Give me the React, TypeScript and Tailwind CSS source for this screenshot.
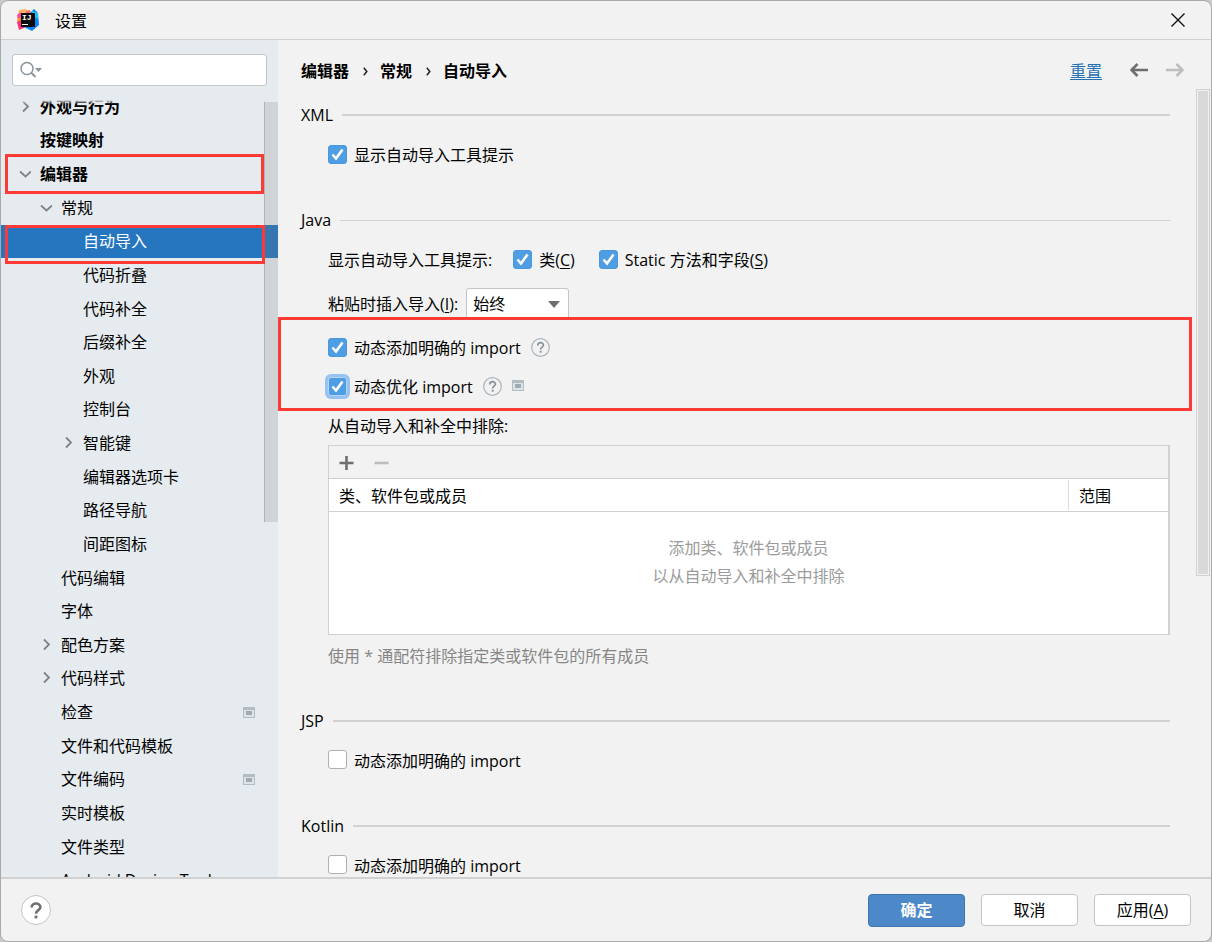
import type { ReactNode } from 'react';

type TreeItem = {
  label: string;
  level: number;
  arrow?: 'open' | 'closed';
  bold?: boolean;
  selected?: boolean;
  marked?: boolean;
  project?: boolean;
};

const treeItems: TreeItem[] = [
  { label: '外观与行为', level: 0, arrow: 'closed', bold: true },
  { label: '按键映射', level: 0, bold: true },
  { label: '编辑器', level: 0, arrow: 'open', bold: true, marked: true },
  { label: '常规', level: 1, arrow: 'open' },
  { label: '自动导入', level: 2, selected: true, marked: true },
  { label: '代码折叠', level: 2 },
  { label: '代码补全', level: 2 },
  { label: '后缀补全', level: 2 },
  { label: '外观', level: 2 },
  { label: '控制台', level: 2 },
  { label: '智能键', level: 2, arrow: 'closed' },
  { label: '编辑器选项卡', level: 2 },
  { label: '路径导航', level: 2 },
  { label: '间距图标', level: 2 },
  { label: '代码编辑', level: 1 },
  { label: '字体', level: 1 },
  { label: '配色方案', level: 1, arrow: 'closed' },
  { label: '代码样式', level: 1, arrow: 'closed' },
  { label: '检查', level: 1, project: true },
  { label: '文件和代码模板', level: 1 },
  { label: '文件编码', level: 1, project: true },
  { label: '实时模板', level: 1 },
  { label: '文件类型', level: 1 },
  { label: 'Android Design Tools', level: 1 },
];

const indent = ['pl-4', 'pl-[37px]', 'pl-[59px]'];

function Logo() {
  return (
    <svg width="22" height="22" viewBox="0 0 22 22" aria-hidden="true">
      <path d="M2 1 L9 0 L12 4 L5 14 L1 6 Z" fill="#fdb460" />
      <path d="M0 6 L4 3 L8 9 L5 14 L1 12 Z" fill="#ff45a0" />
      <path d="M1 9 L5 8 L5 13 L0 14 Z" fill="#ff8a1e" />
      <path d="M0 13 L5 11 L9 18 L2 21 Z" fill="#fe2f7c" />
      <path d="M9 2 L13 1 L14 5 L9 5 Z" fill="#ff6a5c" />
      <path d="M13 4 L17 0 L21 4 L22 16 L15 22 L7 18 L14 12 Z" fill="#0a84f8" />
      <path d="M15 2 L21 4 L21 10 L15 7 Z" fill="#21c5f5" />
      <rect x="4" y="4" width="14" height="14" fill="#0b0b0b" />
      <text x="5" y="11" fontSize="8" fontWeight="700" fill="#fff" fontFamily="Liberation Mono, monospace">IJ</text>
      <rect x="5" y="15" width="6" height="1" fill="#fff" />
    </svg>
  );
}

function Arrow({ kind }: { kind: 'open' | 'closed' }) {
  return (
    <svg width="14" height="14" viewBox="0 0 14 14" fill="none" stroke="#7f8487" strokeWidth="1.8" aria-hidden="true">
      {kind === 'open' ? <path d="M4 4.5 L9.5 9.5 L15 4.5" className="-translate-x-px" /> : <path d="M6 1.5 L11 6.5 L6 11.5" />}
    </svg>
  );
}

function ProjectIcon() {
  return (
    <svg width="12" height="11" viewBox="0 0 12 11" aria-hidden="true" shapeRendering="crispEdges">
      <rect width="12" height="11" fill="#b1bcc3" />
      <rect x="1" y="3" width="10" height="7" fill="#dde3e7" />
      <rect x="3" y="4" width="6" height="4" fill="#9fabb2" />
    </svg>
  );
}

function HelpIcon() {
  return (
    <button type="button" aria-label="帮助" className="-mt-0.5 flex">
      <svg width="19" height="19" viewBox="0 0 19 19" fill="none" aria-hidden="true">
        <circle cx="9.5" cy="9.5" r="8.8" stroke="#a9b5bc" strokeWidth="1.2" />
        <path d="M6.8 7.4 C6.8 3.8 12.4 3.9 12.4 7.2 C12.4 9.2 9.6 9.2 9.6 11.4" stroke="#87939a" strokeWidth="1.7" />
        <rect x="8.7" y="12.8" width="1.9" height="1.9" fill="#87939a" />
      </svg>
    </button>
  );
}

function Checkbox({ children, checked = false, focused = false }: { children: ReactNode; checked?: boolean; focused?: boolean }) {
  return (
    <label className="flex h-6 items-center gap-[7px]">
      <span className="relative -mt-0.5 flex">
        <input
          type="checkbox"
          defaultChecked={checked}
          className={`peer h-[19px] w-[19px] appearance-none rounded-[3px] border border-[#b0b0b0] bg-white outline-none ${focused ? 'ring-3 ring-[#97c3f3] checked:border-[#b5d4f5] checked:bg-[#4f9ee3]' : 'checked:border-[#4a97dd] checked:bg-[#4f9ee3]'}`}
        />
        <svg viewBox="0 0 19 19" className="pointer-events-none absolute inset-0 hidden peer-checked:block" fill="none" stroke="#fff" strokeWidth="2.6" aria-hidden="true">
          <path d="M4.5 9.5 L8 13.5 L14.5 4.5" />
        </svg>
      </span>
      <span>{children}</span>
    </label>
  );
}

function Section({ title, thin = false, children }: { title: string; thin?: boolean; children: ReactNode }) {
  return (
    <section>
      <div className="flex h-6 items-center gap-[9px]">
        <h2>{title}</h2>
        <div className={`flex-1 bg-[#d1d1d1] ${thin ? 'h-px' : 'h-0.5'}`} />
      </div>
      <div className="mt-4 pl-[27px]">{children}</div>
    </section>
  );
}

function Sidebar() {
  return (
    <aside className="flex w-[277px] shrink-0 flex-col bg-[#e6ebef]">
      <div className="px-[11px] pt-3.5">
        <div className="flex h-8 items-center rounded-[3px] border border-[#c4c4c4] bg-white pl-[7px]">
          <svg width="22" height="18" viewBox="0 0 22 18" fill="none" aria-hidden="true">
            <circle cx="7" cy="7.5" r="6" stroke="#8a949b" strokeWidth="1.5" />
            <path d="M11.5 12 L15.5 16" stroke="#8a949b" strokeWidth="2" />
            <path d="M15 7 H22 L18.5 11 Z" fill="#8a949b" />
          </svg>
          <input type="text" aria-label="搜索设置" className="min-w-0 flex-1 px-1 outline-none" />
        </div>
      </div>
      <div className="relative mt-3.5 min-h-0 flex-1 overflow-hidden">
        <ul className="-mt-2.5 flex h-[807px] flex-col">
          {treeItems.map((item) => (
            <li
              key={item.label}
              className={`relative flex flex-1 items-center pr-[23px] ${indent[item.level]} ${item.selected ? 'bg-[#2675bf] text-white' : ''} ${item.bold ? 'font-bold' : ''}`}
            >
              <span className="flex w-[23px] shrink-0">{item.arrow && <Arrow kind={item.arrow} />}</span>
              <span className="flex-1 whitespace-nowrap">{item.label}</span>
              {item.project && <ProjectIcon />}
              {item.marked && (
                <span className={`pointer-events-none absolute left-1 z-10 border-3 border-[#fe3a37] ${item.selected ? 'top-0 right-[13px] h-[39px]' : '-top-[3px] right-3.5 h-10'}`} />
              )}
            </li>
          ))}
        </ul>
        <div className="absolute inset-x-0 top-0 h-1 bg-linear-to-b from-[#e6ebef] to-transparent" />
        <div className="absolute top-0.5 right-0 h-[420px] w-3.5 border-l border-black/15 bg-[#777]/20" />
      </div>
    </aside>
  );
}

function ExcludeTable() {
  return (
    <div className="mt-[7px] border border-r-2 border-[#d1d1d1]">
      <div className="flex h-8 items-center gap-5 pl-2.5">
        <button type="button" aria-label="添加">
          <svg width="15" height="15" viewBox="0 0 15 15" stroke="#6e6e6e" strokeWidth="2.6" aria-hidden="true">
            <path d="M7.5 1 V15 M0.5 8 H14.5" />
          </svg>
        </button>
        <button type="button" aria-label="移除" disabled>
          <svg width="15" height="15" viewBox="0 0 15 15" stroke="#bdbdbd" strokeWidth="2.6" aria-hidden="true">
            <path d="M0.5 8 H14.5" />
          </svg>
        </button>
      </div>
      <table className="w-full border-t border-[#d1d1d1] bg-white">
        <thead>
          <tr className="h-[33px] border-b border-[#d1d1d1] text-left">
            <th className="pt-0.5 pb-0 pl-2.5 font-normal">类、软件包或成员</th>
            <th className="w-[100px] p-0 font-normal">
              <span className="block border-l border-[#dcdcdc] pt-0.5 pl-2.5 leading-7">范围</span>
            </th>
          </tr>
        </thead>
        <tbody>
          <tr>
            <td colSpan={2} className="h-[122px] pt-[22px] text-center align-top leading-7 text-[#9b9b9b]">
              添加类、软件包或成员
              <br />
              以从自动导入和补全中排除
            </td>
          </tr>
        </tbody>
      </table>
    </div>
  );
}

function Crumb() {
  return (
    <svg width="5" height="9" viewBox="0 0 5 9" fill="none" stroke="#222" strokeWidth="1.5" aria-hidden="true">
      <path d="M0.8 0.8 L3.8 4.5 L0.8 8.2" />
    </svg>
  );
}

function Content() {
  return (
    <main className="relative mr-px flex min-w-0 flex-1 flex-col">
      <header className="mt-3.5 flex h-[34px] items-center justify-between pr-[26px] pl-[23px]">
        <nav className="flex items-center gap-3.5 font-bold">
          <a href="#editor">编辑器</a>
          <Crumb />
          <a href="#general" className="-ml-0.5">常规</a>
          <Crumb />
          <a href="#auto-import" className="-ml-0.5">自动导入</a>
        </nav>
        <div className="flex items-center">
          <a href="#reset" className="mr-7 text-[#2470b3] underline underline-offset-2">重置</a>
          <button type="button" aria-label="后退" className="mr-[18px] pb-0.5">
            <svg width="18" height="14" viewBox="0 0 18 14" fill="none" stroke="#6e6e6e" strokeWidth="2.5" aria-hidden="true">
              <path d="M18 7 H1.5 M7.5 1 L1.5 7 L7.5 13" />
            </svg>
          </button>
          <button type="button" aria-label="前进" disabled className="pb-0.5">
            <svg width="18" height="14" viewBox="0 0 18 14" fill="none" stroke="#bdbdbd" strokeWidth="2.5" aria-hidden="true">
              <path d="M0 7 H16.5 M10.5 1 L16.5 7 L10.5 13" />
            </svg>
          </button>
        </div>
      </header>

      <div className="relative min-h-0 flex-1 overflow-hidden">
        <div className="flex flex-col gap-[41px] pt-[15px] pr-10 pl-[23px]">
          <Section title="XML">
            <Checkbox checked>显示自动导入工具提示</Checkbox>
          </Section>

          <Section title="Java" thin>
            <div className="flex h-6 items-center">
              <span className="mr-[21px]">显示自动导入工具提示:</span>
              <div className="flex gap-6">
                <Checkbox checked>
                  类(<u className="underline-offset-2">C</u>)
                </Checkbox>
                <Checkbox checked>
                  Static 方法和字段(<u className="underline-offset-2">S</u>)
                </Checkbox>
              </div>
            </div>

            <div className="mt-4 flex h-8 items-center gap-2">
              <label htmlFor="paste-imports">
                粘贴时插入导入(<u className="underline-offset-2">I</u>):
              </label>
              <div className="relative">
                <select id="paste-imports" defaultValue="始终" className="h-8 w-[103px] appearance-none rounded-[3px] border border-[#c4c4c4] bg-white pl-1.5">
                  <option>始终</option>
                  <option>询问</option>
                  <option>从不</option>
                </select>
                <svg width="12" height="7" viewBox="0 0 12 7" className="pointer-events-none absolute top-[13px] right-[9px]" aria-hidden="true">
                  <path d="M0 0 H12 L6 7 Z" fill="#6e6e6e" />
                </svg>
              </div>
            </div>

            <div className="relative mt-4 flex flex-col gap-[15px]">
              <div className="flex items-center gap-2.5">
                <Checkbox checked>动态添加明确的 import</Checkbox>
                <HelpIcon />
              </div>
              <div className="flex items-center gap-2.5">
                <Checkbox checked focused>动态优化 import</Checkbox>
                <HelpIcon />
                <span className="-mt-[3px]">
                  <ProjectIcon />
                </span>
              </div>
              <div className="pointer-events-none absolute -top-[19px] -right-[22px] -bottom-3 -left-[50px] border-3 border-[#fe3a37]" />
            </div>

            <p className="mt-[15px]">从自动导入和补全中排除:</p>
            <ExcludeTable />
            <p className="mt-[9px] text-[#868686]">使用 * 通配符排除指定类或软件包的所有成员</p>
          </Section>

          <Section title="JSP">
            <Checkbox>动态添加明确的 import</Checkbox>
          </Section>

          <Section title="Kotlin">
            <Checkbox>动态添加明确的 import</Checkbox>
          </Section>
        </div>
      </div>
      <div className="absolute top-[49px] right-0 h-[487px] w-3.5 border border-[#d1d1d1] bg-[#d9d9d9] ring-1 ring-[#f2f2f2] ring-inset" />
    </main>
  );
}

export default function App() {
  return (
    <div className="h-screen bg-[#c9c9c9] font-['Open_Sans','Noto_Sans_CJK_SC',sans-serif] text-base leading-6 text-black">
      <div className="flex h-full flex-col overflow-hidden rounded-lg border border-[#a9a9a9] bg-[#f2f2f2]">
        <div className="flex h-[39px] shrink-0 items-center border-b border-[#d1d1d1] pr-[26px] pl-4">
          <Logo />
          <h1 className="ml-4 flex-1 pt-0.5">设置</h1>
          <button type="button" aria-label="关闭">
            <svg width="14" height="14" viewBox="0 0 14 14" stroke="#111" strokeWidth="1.4" aria-hidden="true">
              <path d="M0.5 0.5 L13.5 13.5 M13.5 0.5 L0.5 13.5" />
            </svg>
          </button>
        </div>

        <div className="flex min-h-0 flex-1">
          <Sidebar />
          <Content />
        </div>

        <footer className="flex h-16 shrink-0 items-center gap-4 border-t-2 border-[#d1d1d1] pr-5 pl-5">
          <button type="button" aria-label="帮助" className="mr-auto flex h-[30px] w-[30px] items-center justify-center rounded-full border border-[#c4c4c4] bg-white">
            <svg width="12" height="17" viewBox="0 0 12 17" fill="none" aria-hidden="true">
              <path d="M1.6 5.6 C1.6 0.2 10.4 0.4 10.4 5.2 C10.4 8.2 6 8.2 6 11.8" stroke="#6e6e6e" strokeWidth="2.6" />
              <rect x="4.6" y="13.6" width="2.8" height="2.8" fill="#6e6e6e" />
            </svg>
          </button>
          <button type="button" className="h-[33px] w-[97px] rounded-[4px] border border-[#3d75b3] bg-[#4d89c9] font-bold text-white">确定</button>
          <button type="button" className="h-8 w-[97px] rounded-[4px] border border-[#c4c4c4] bg-white">取消</button>
          <button type="button" className="h-8 w-[97px] rounded-[4px] border border-[#c4c4c4] bg-white">
            应用(<u className="underline-offset-2">A</u>)
          </button>
        </footer>
      </div>
    </div>
  );
}
